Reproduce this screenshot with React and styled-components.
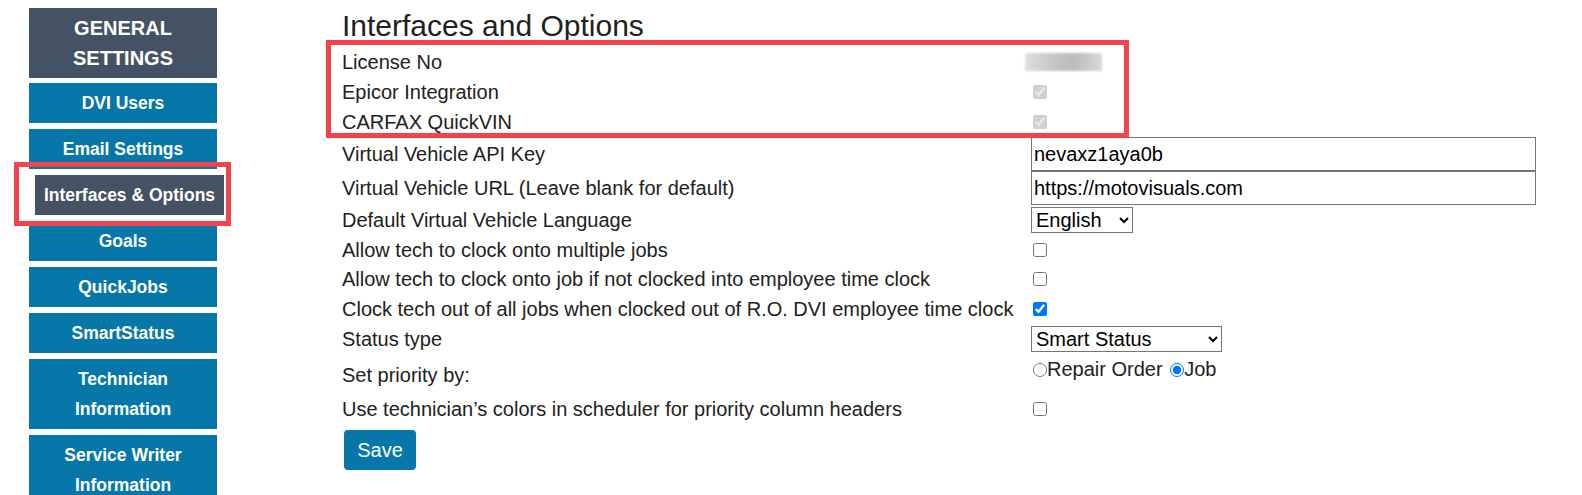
import React from 'react'
import styled, { createGlobalStyle } from 'styled-components';

const GlobalStyle = createGlobalStyle`
  html, body {
    overflow: hidden;
  }
  body {
    margin: 0;
    background: #fff;
    font-family: "Liberation Sans", Arial, sans-serif;
    color: #212121;
  }
`

const menu = [
    { label: 'DVI Users' },
    { label: 'Email Settings' },
    { label: 'Interfaces & Options', active: true },
    { label: 'Goals' },
    { label: 'QuickJobs' },
    { label: 'SmartStatus' },
    { label: 'Technician', second: 'Information' },
    { label: 'Service Writer', second: 'Information' },
]

function App() {
    return (
        <>
            <GlobalStyle />
            <StyledPage>
                <StyledSidebar>
                    <StyledHeader>GENERAL<br />SETTINGS</StyledHeader>
                    {menu.map((item) =>
                        <StyledMenuItem key={item.label} active={item.active ? 1 : 0}>
                            {item.label}
                            {item.second && <><br />{item.second}</>}
                        </StyledMenuItem>)
                    }
                    <StyledMark style={{ left: -15, top: 162, width: 207, height: 54 }} />
                </StyledSidebar>

                <StyledMain>
                    <StyledTitle>Interfaces and Options</StyledTitle>
                    <StyledForm>
                        <StyledRow h={30}>
                            <StyledLabel>License No</StyledLabel>
                            <StyledValue><StyledBlur /></StyledValue>
                        </StyledRow>
                        <StyledRow h={30}>
                            <StyledLabel>Epicor Integration</StyledLabel>
                            <StyledValue><StyledCheck type="checkbox" checked disabled readOnly /></StyledValue>
                        </StyledRow>
                        <StyledRow h={30}>
                            <StyledLabel>CARFAX QuickVIN</StyledLabel>
                            <StyledValue><StyledCheck type="checkbox" checked disabled readOnly /></StyledValue>
                        </StyledRow>
                        <StyledRow h={34}>
                            <StyledLabel>Virtual Vehicle API Key</StyledLabel>
                            <StyledValue><StyledInput defaultValue="nevaxz1aya0b" /></StyledValue>
                        </StyledRow>
                        <StyledRow h={34}>
                            <StyledLabel>Virtual Vehicle URL (Leave blank for default)</StyledLabel>
                            <StyledValue><StyledInput defaultValue="https://motovisuals.com" /></StyledValue>
                        </StyledRow>
                        <StyledRow h={30}>
                            <StyledLabel>Default Virtual Vehicle Language</StyledLabel>
                            <StyledValue>
                                <StyledSelect w={102} defaultValue="English">
                                    <option>English</option>
                                    <option>Spanish</option>
                                </StyledSelect>
                            </StyledValue>
                        </StyledRow>
                        <StyledRow h={29}>
                            <StyledLabel>Allow tech to clock onto multiple jobs</StyledLabel>
                            <StyledValue><StyledCheck type="checkbox" /></StyledValue>
                        </StyledRow>
                        <StyledRow h={30}>
                            <StyledLabel>Allow tech to clock onto job if not clocked into employee time clock</StyledLabel>
                            <StyledValue><StyledCheck type="checkbox" /></StyledValue>
                        </StyledRow>
                        <StyledRow h={29}>
                            <StyledLabel>Clock tech out of all jobs when clocked out of R.O. DVI employee time clock</StyledLabel>
                            <StyledValue><StyledCheck type="checkbox" defaultChecked /></StyledValue>
                        </StyledRow>
                        <StyledRow h={32}>
                            <StyledLabel>Status type</StyledLabel>
                            <StyledValue>
                                <StyledSelect w={191} defaultValue="Smart Status">
                                    <option>Smart Status</option>
                                    <option>Classic</option>
                                </StyledSelect>
                            </StyledValue>
                        </StyledRow>
                        <StyledRow h={40}>
                            <StyledLabel top={9}>Set priority by:</StyledLabel>
                            <StyledValue top={3}>
                                <StyledRadio type="radio" name="priority" />Repair Order{' '}
                                <StyledRadio type="radio" name="priority" defaultChecked />Job
                            </StyledValue>
                        </StyledRow>
                        <StyledRow h={27}>
                            <StyledLabel>Use technician’s colors in scheduler for priority column headers</StyledLabel>
                            <StyledValue><StyledCheck type="checkbox" /></StyledValue>
                        </StyledRow>
                    </StyledForm>
                    <StyledSave>Save</StyledSave>
                    <StyledMark style={{ left: -16, top: 40, width: 793, height: 88 }} />
                </StyledMain>
            </StyledPage>
        </>
    )
}

const StyledPage = styled.div`
    display: flex;
    align-items: flex-start;
    height: 495px;
    overflow: hidden;
`

const StyledSidebar = styled.nav`
    position: relative;
    flex: 0 0 188px;
    display: flex;
    flex-direction: column;
    gap: 6px;
    width: 188px;
    margin-left: 29px;
    padding-top: 8px;
`

const StyledHeader = styled.div`
    background: #455264;
    color: #fff;
    font-size: 20px;
    font-weight: 700;
    line-height: 30px;
    text-align: center;
    padding: 5px 0;
    margin-bottom: -1px;
`

const StyledMenuItem = styled.div`
    background: ${({ active }) => active ? '#455264' : '#0677a8'};
    color: #fff;
    font-size: 17.5px;
    font-weight: 700;
    line-height: 30px;
    text-align: center;
    white-space: nowrap;
    padding: 5px 0;
    transform: ${({ active }) => active ? 'translateX(6px)' : 'none'};
    width: ${({ active }) => active ? '189px' : 'auto'};
`

const StyledMark = styled.div`
    position: absolute;
    border: 5px solid #f2444a;
    pointer-events: none;
`

const StyledMain = styled.main`
    position: relative;
    flex: 0 0 auto;
    margin-left: 125px;
    padding-top: 10px;
`

const StyledTitle = styled.h2`
    margin: 0 0 5px;
    font-size: 30px;
    font-weight: 400;
    line-height: 32px;
    color: #212121;
`

const StyledForm = styled.div`
    display: flex;
    flex-direction: column;
`

const StyledRow = styled.div`
    display: grid;
    grid-template-columns: 689px 505px;
    align-items: center;
    height: ${({ h }) => h}px;
`

const StyledLabel = styled.div`
    font-size: 20px;
    line-height: 22px;
    white-space: nowrap;
    align-self: ${({ top }) => top !== undefined ? 'start' : 'center'};
    padding-top: ${({ top }) => top || 0}px;
`

const StyledValue = styled.div`
    display: flex;
    align-items: center;
    font-size: 20px;
    white-space: pre;
    align-self: ${({ top }) => top !== undefined ? 'start' : 'center'};
    padding-top: ${({ top }) => top || 0}px;
`

const StyledBlur = styled.div`
    width: 77px;
    height: 18px;
    margin-left: -6px;
    background: linear-gradient(90deg, #dfdfe1 0%, #c4c4c6 40%, #bcbcbe 65%, #d7d9dc 100%);
    filter: blur(1px);
`

const StyledCheck = styled.input`
    width: 14px;
    height: 14px;
    margin: 0 0 0 2px;
`

const StyledRadio = styled.input`
    width: 14px;
    height: 14px;
    margin: 0 0 0 2px;
`

const StyledInput = styled.input`
    box-sizing: border-box;
    width: 505px;
    height: 34px;
    padding: 1px 2px;
    border: 1px solid #767676;
    font-family: "Liberation Sans", Arial, sans-serif;
    font-size: 20px;
    color: #000;
    outline: none;
`

const StyledSelect = styled.select`
    box-sizing: border-box;
    width: ${({ w }) => w}px;
    height: 26px;
    font-family: "Liberation Sans", Arial, sans-serif;
    font-size: 20px;
    color: #000;
    border: 1px solid #767676;
    border-radius: 0;
    background: #fff;
`

const StyledSave = styled.button`
    margin: 8px 0 0 2px;
    width: 72px;
    height: 40px;
    border: none;
    border-radius: 4px;
    background: #0677a8;
    color: #fff;
    font-family: "Liberation Sans", Arial, sans-serif;
    font-size: 20px;
`

export default App
